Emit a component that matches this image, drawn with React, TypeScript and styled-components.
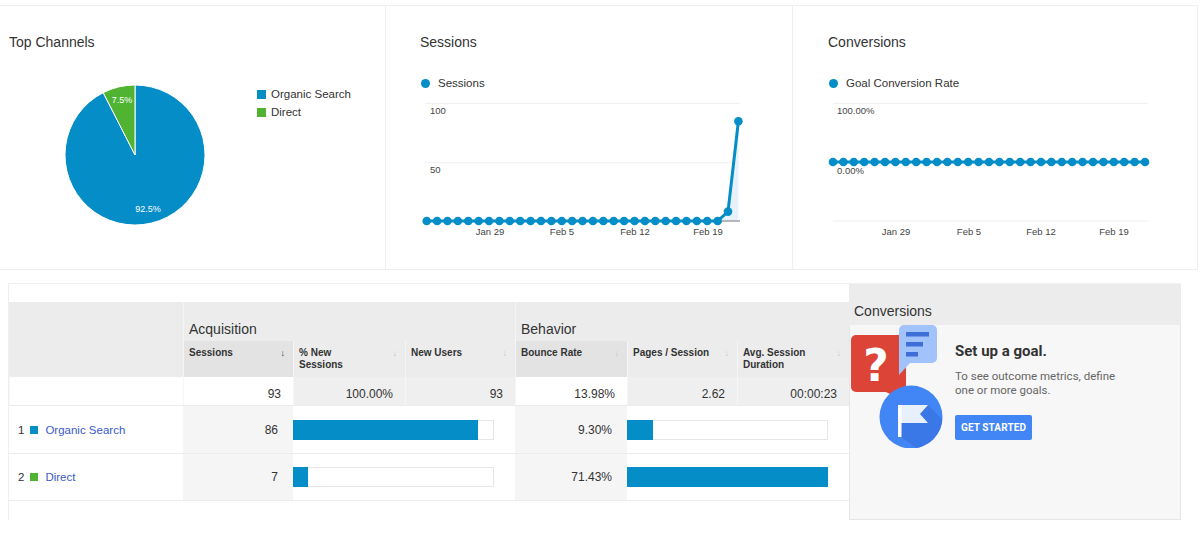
import React from 'react'
import styled, { createGlobalStyle } from 'styled-components'

const GlobalStyle = createGlobalStyle`
  body {
    margin: 0;
    background: #fff;
    font-family: "Liberation Sans", Arial, sans-serif;
    color: #333;
  }
`

const BLUE = '#058dc7'
const GREEN = '#50b432'
const COLS = '174px 110px 112px 110px 112px 110px 112px'

const Page = styled.div`
  width: 1200px;
  height: 549px;
  padding-top: 5px;
  box-sizing: border-box;
  overflow: hidden;
`

const TopRow = styled.div`
  display: grid;
  grid-template-columns: 386px 407px 405px;
  width: 1198px;
  height: 265px;
  box-sizing: border-box;
  border-top: 1px solid #efefef;
  border-bottom: 1px solid #efefef;
`

const Panel = styled.div`
  border-right: 1px solid #efefef;
  box-sizing: border-box;
  overflow: hidden;
`

const PanelHead = styled.div<{ $left: number }>`
  padding-left: ${(p) => p.$left}px;
  padding-top: 27px;
`

const Title = styled.div`
  font-size: 14px;
  line-height: 18px;
  color: #333;
`

const Legend = styled.div`
  display: flex;
  align-items: center;
  margin-top: 24px;
  padding-left: 1px;
  font-size: 11.5px;
  line-height: 16px;
  color: #333;
  &::before {
    content: '';
    width: 9px;
    height: 9px;
    border-radius: 50%;
    background: ${BLUE};
    margin-right: 8px;
  }
`

const Chart = styled.svg`
  display: block;
  margin-top: 4px;
  font-family: "Liberation Sans", Arial, sans-serif;
`

const PieRow = styled.div`
  display: flex;
  align-items: flex-start;
  margin-top: 34px;
  padding-left: 65px;
`

const PieLegend = styled.div`
  display: flex;
  flex-direction: column;
  margin-left: 52px;
`

const PieLegendItem = styled.div<{ $color: string }>`
  display: flex;
  align-items: center;
  font-size: 11.5px;
  line-height: 18px;
  color: #333;
  &::before {
    content: '';
    width: 9px;
    height: 9px;
    background: ${(p) => p.$color};
    margin-right: 5px;
  }
`

const BottomRow = styled.div`
  display: flex;
  margin-top: 13px;
  padding-left: 8px;
  height: 237px;
`

const TableWrap = styled.div`
  width: 841px;
  height: 237px;
  box-sizing: border-box;
  border-top: 1px solid #efefef;
  border-left: 1px solid #efefef;
  padding-top: 18px;
`

const Row = styled.div<{ $h: number }>`
  display: grid;
  grid-template-columns: ${COLS};
  height: ${(p) => p.$h}px;
`

const GroupCell = styled.div<{ $span: number }>`
  grid-column: span ${(p) => p.$span};
  background: #ececec;
  border-left: 1px solid #f4f4f4;
  padding: 18px 0 0 5px;
  font-size: 14px;
  line-height: 18px;
  color: #333;
  &:first-child {
    border-left: none;
  }
`

const HeadCell = styled.div<{ $sorted?: boolean }>`
  display: flex;
  justify-content: space-between;
  align-items: flex-start;
  background: ${(p) => (p.$sorted ? '#e3e3e3' : '#ececec')};
  border-left: 1px solid #f4f4f4;
  padding: 6px 8px 0 5px;
  font-size: 10px;
  font-weight: bold;
  line-height: 12px;
  color: #333;
  &:first-child {
    border-left: none;
  }
`

const SortArrow = styled.span<{ $active?: boolean }>`
  font-size: 9px;
  font-weight: normal;
  color: ${(p) => (p.$active ? '#333' : '#c4c4c4')};
`

const TotalCell = styled.div<{ $white?: boolean }>`
  display: flex;
  justify-content: flex-end;
  align-items: flex-end;
  background: ${(p) => (p.$white ? '#fff' : '#efefef')};
  border-left: 1px solid #f6f6f6;
  padding: 0 12px 3px 0;
  font-size: 12px;
  line-height: 16px;
  color: #333;
`

const DataRow = styled(Row)`
  border-top: 1px solid #ececec;
  box-sizing: border-box;
  &:last-child {
    border-bottom: 1px solid #ececec;
  }
`

const NameCell = styled.div`
  display: flex;
  align-items: center;
  padding-left: 9px;
  font-size: 11.5px;
  color: #333;
`

const Swatch = styled.span<{ $color: string }>`
  width: 8px;
  height: 8px;
  margin: 0 7px 0 6px;
  background: ${(p) => p.$color};
`

const ChannelLink = styled.a`
  color: #3a5bc7;
  text-decoration: none;
`

const NumCell = styled.div<{ $shade?: boolean }>`
  display: flex;
  align-items: center;
  justify-content: flex-end;
  padding-right: 15px;
  background: ${(p) => (p.$shade ? '#f5f5f5' : '#fff')};
  font-size: 12px;
  color: #333;
`

const BarCell = styled.div`
  grid-column: span 2;
  display: flex;
  align-items: center;
`

const BarTrack = styled.div`
  width: 201px;
  height: 20px;
  box-sizing: border-box;
  border: 1px solid #e6e6e6;
  background: #fff;
`

const BarFill = styled.div`
  height: 20px;
  margin: -1px 0 0 -1px;
  background: ${BLUE};
`

const GoalPanel = styled.div`
  width: 332px;
  height: 237px;
  display: flex;
  flex-direction: column;
  font-family: Roboto, "Liberation Sans", Arial, sans-serif;
`

const GoalHead = styled.div`
  height: 42px;
  box-sizing: border-box;
  background: #ececec;
  border-top: 1px solid #f3f3f3;
  padding: 18px 0 0 5px;
  font-family: "Liberation Sans", Arial, sans-serif;
  font-size: 14px;
  line-height: 18px;
  color: #333;
`

const GoalBody = styled.div`
  flex: 1;
  display: flex;
  align-items: flex-start;
  background: #f7f7f7;
  border: 1px solid #e6e6e6;
  border-top: none;
`

const GoalText = styled.div`
  margin-left: 12px;
  padding-top: 17px;
  display: flex;
  flex-direction: column;
  align-items: flex-start;
`

const GoalTitle = styled.div`
  font-size: 15px;
  font-weight: bold;
  line-height: 18px;
  color: #333;
`

const GoalDesc = styled.div`
  margin-top: 9px;
  width: 180px;
  font-size: 11.5px;
  line-height: 14px;
  color: #666;
`

const GetStarted = styled.button`
  margin-top: 18px;
  height: 25px;
  width: 77px;
  padding: 0;
  border: none;
  border-radius: 2px;
  background: #4285f4;
  color: #fff;
  font-family: Roboto, "Liberation Sans", Arial, sans-serif;
  font-size: 10px;
  font-weight: bold;
  letter-spacing: 0.1px;
`

const N = 31
const sessions = Array.from({ length: N }, (_, i) => (i === 29 ? 8 : i === 30 ? 85 : 0))

function SessionsChart() {
  const xs = sessions.map((_, i) => 40.7 + i * 10.39)
  const ys = sessions.map((v) => 126 - v * 1.174)
  const line = xs.map((x, i) => `${x},${ys[i]}`).join(' ')
  const area = `${xs[0]},126 ${line} ${xs[N - 1]},126`
  return (
    <Chart width={406} height={150}>
      <line x1={39} x2={354} y1={8.3} y2={8.3} stroke="#eeeeee" />
      <line x1={39} x2={354} y1={67.7} y2={67.7} stroke="#eeeeee" />
      <text x={44} y={19} fontSize={9.5} fill="#444">100</text>
      <text x={44} y={78} fontSize={9.5} fill="#444">50</text>
      <polygon points={area} fill="#e6f1f9" />
      <line x1={39} x2={354} y1={126} y2={126} stroke="#777" />
      <polyline points={line} fill="none" stroke={BLUE} strokeWidth={3} strokeLinejoin="round" />
      {xs.map((x, i) => (
        <circle key={i} cx={x} cy={ys[i]} r={4.3} fill={BLUE} />
      ))}
      {[
        ['Jan 29', 104],
        ['Feb 5', 176],
        ['Feb 12', 249],
        ['Feb 19', 322],
      ].map(([t, x]) => (
        <text key={t} x={x} y={140} fontSize={9.5} fill="#444" textAnchor="middle">
          {t}
        </text>
      ))}
    </Chart>
  )
}

function ConversionChart() {
  const xs = Array.from({ length: N }, (_, i) => 40 + i * 10.4)
  return (
    <Chart width={405} height={150}>
      <line x1={40} x2={355} y1={8.3} y2={8.3} stroke="#eeeeee" />
      <line x1={40} x2={355} y1={126} y2={126} stroke="#eeeeee" />
      <text x={44} y={19} fontSize={9.5} fill="#444">100.00%</text>
      <line x1={40} x2={352} y1={67} y2={67} stroke={BLUE} strokeWidth={3} />
      {xs.map((x, i) => (
        <circle key={i} cx={x} cy={67} r={4.3} fill={BLUE} />
      ))}
      <text x={44} y={79} fontSize={9.5} fill="#444">0.00%</text>
      {[
        ['Jan 29', 103],
        ['Feb 5', 176],
        ['Feb 12', 248],
        ['Feb 19', 321],
      ].map(([t, x]) => (
        <text key={t} x={x} y={140} fontSize={9.5} fill="#444" textAnchor="middle">
          {t}
        </text>
      ))}
    </Chart>
  )
}

function Pie() {
  const a = (27 * Math.PI) / 180
  const ex = 70 - 70 * Math.sin(a)
  const ey = 70 - 70 * Math.cos(a)
  return (
    <svg width={140} height={140} style={{ fontFamily: '"Liberation Sans", Arial, sans-serif' }}>
      <path d={`M70,70 L${ex},${ey} A70,70 0 1 0 70,0 Z`} fill={BLUE} stroke="#fff" strokeWidth={1} />
      <path d={`M70,70 L70,0 A70,70 0 0 0 ${ex},${ey} Z`} fill={GREEN} stroke="#fff" strokeWidth={1} />
      <text x={57} y={18} fontSize={9} fill="#fff" textAnchor="middle">7.5%</text>
      <text x={83} y={127} fontSize={9} fill="#fff" textAnchor="middle">92.5%</text>
    </svg>
  )
}

function GoalIcon() {
  return (
    <svg width={93} height={123} viewBox="0 0 93 123">
      <defs>
        <clipPath id="goal-circle">
          <circle cx={61} cy={92} r={31.5} />
        </clipPath>
      </defs>
      <rect x={1} y={10} width={55} height={57} rx={5} fill="#db4437" />
      <polygon points="34,66 56,66 56,77" fill="#db4437" />
      <text
        x={26}
        y={56}
        fontSize={44}
        fontWeight={900}
        fill="#fff"
        textAnchor="middle"
        fontFamily='"DejaVu Sans", sans-serif'
      >
        ?
      </text>
      <rect x={49} y={0} width={38} height={38} rx={5} fill="#a1c2fa" />
      <polygon points="49,30 60,38 49,50" fill="#a1c2fa" />
      <rect x={56} y={7} width={23} height={4.5} fill="#3e6fd6" />
      <rect x={56} y={17} width={17} height={4.5} fill="#3e6fd6" />
      <rect x={56} y={27} width={12} height={4.5} fill="#3e6fd6" />
      <circle cx={61} cy={92} r={31.5} fill="#4285f4" />
      <g clipPath="url(#goal-circle)">
        <polygon points="51,80 78,80 110,112 90,140 51,112" fill="#3b78e7" />
      </g>
      <polygon points="51,80 78,80 70,89 78,98 51,98" fill="#e8f0fe" />
      <rect x={48} y={80} width={3.5} height={32} fill="#fff" />
    </svg>
  )
}

export default function App() {
  return (
    <Page>
      <GlobalStyle />
      <TopRow>
        <Panel>
          <PanelHead $left={9}>
            <Title>Top Channels</Title>
          </PanelHead>
          <PieRow>
            <Pie />
            <PieLegend>
              <PieLegendItem $color={BLUE}>Organic Search</PieLegendItem>
              <PieLegendItem $color={GREEN}>Direct</PieLegendItem>
            </PieLegend>
          </PieRow>
        </Panel>
        <Panel>
          <PanelHead $left={34}>
            <Title>Sessions</Title>
            <Legend>Sessions</Legend>
          </PanelHead>
          <SessionsChart />
        </Panel>
        <Panel>
          <PanelHead $left={35}>
            <Title>Conversions</Title>
            <Legend>Goal Conversion Rate</Legend>
          </PanelHead>
          <ConversionChart />
        </Panel>
      </TopRow>

      <BottomRow>
        <TableWrap>
          <Row $h={39}>
            <GroupCell $span={1} />
            <GroupCell $span={3}>Acquisition</GroupCell>
            <GroupCell $span={3}>Behavior</GroupCell>
          </Row>
          <Row $h={36}>
            <HeadCell />
            <HeadCell $sorted>
              Sessions<SortArrow $active>↓</SortArrow>
            </HeadCell>
            <HeadCell>
              <span>
                % New
                <br />
                Sessions
              </span>
              <SortArrow>↓</SortArrow>
            </HeadCell>
            <HeadCell>
              New Users<SortArrow>↓</SortArrow>
            </HeadCell>
            <HeadCell $sorted>
              Bounce Rate<SortArrow>↓</SortArrow>
            </HeadCell>
            <HeadCell>
              Pages / Session<SortArrow>↓</SortArrow>
            </HeadCell>
            <HeadCell>
              <span>
                Avg. Session
                <br />
                Duration
              </span>
              <SortArrow>↓</SortArrow>
            </HeadCell>
          </Row>
          <Row $h={28}>
            <TotalCell $white />
            <TotalCell $white>93</TotalCell>
            <TotalCell>100.00%</TotalCell>
            <TotalCell>93</TotalCell>
            <TotalCell $white>13.98%</TotalCell>
            <TotalCell>2.62</TotalCell>
            <TotalCell>00:00:23</TotalCell>
          </Row>
          {[
            { n: 1, name: 'Organic Search', color: BLUE, s: 86, bounce: '9.30%', bw: 26 },
            { n: 2, name: 'Direct', color: GREEN, s: 7, bounce: '71.43%', bw: 201 },
          ].map((r) => (
            <DataRow key={r.n} $h={48}>
              <NameCell>
                {r.n}
                <Swatch $color={r.color} />
                <ChannelLink href="#">{r.name}</ChannelLink>
              </NameCell>
              <NumCell $shade>{r.s}</NumCell>
              <BarCell>
                <BarTrack>
                  <BarFill style={{ width: Math.round((r.s / 93) * 200) }} />
                </BarTrack>
              </BarCell>
              <NumCell $shade>{r.bounce}</NumCell>
              <BarCell>
                <BarTrack>
                  <BarFill style={{ width: r.bw }} />
                </BarTrack>
              </BarCell>
            </DataRow>
          ))}
        </TableWrap>

        <GoalPanel>
          <GoalHead>Conversions</GoalHead>
          <GoalBody>
            <GoalIcon />
            <GoalText>
              <GoalTitle>Set up a goal.</GoalTitle>
              <GoalDesc>To see outcome metrics, define one or more goals.</GoalDesc>
              <GetStarted>GET STARTED</GetStarted>
            </GoalText>
          </GoalBody>
        </GoalPanel>
      </BottomRow>
    </Page>
  )
}
